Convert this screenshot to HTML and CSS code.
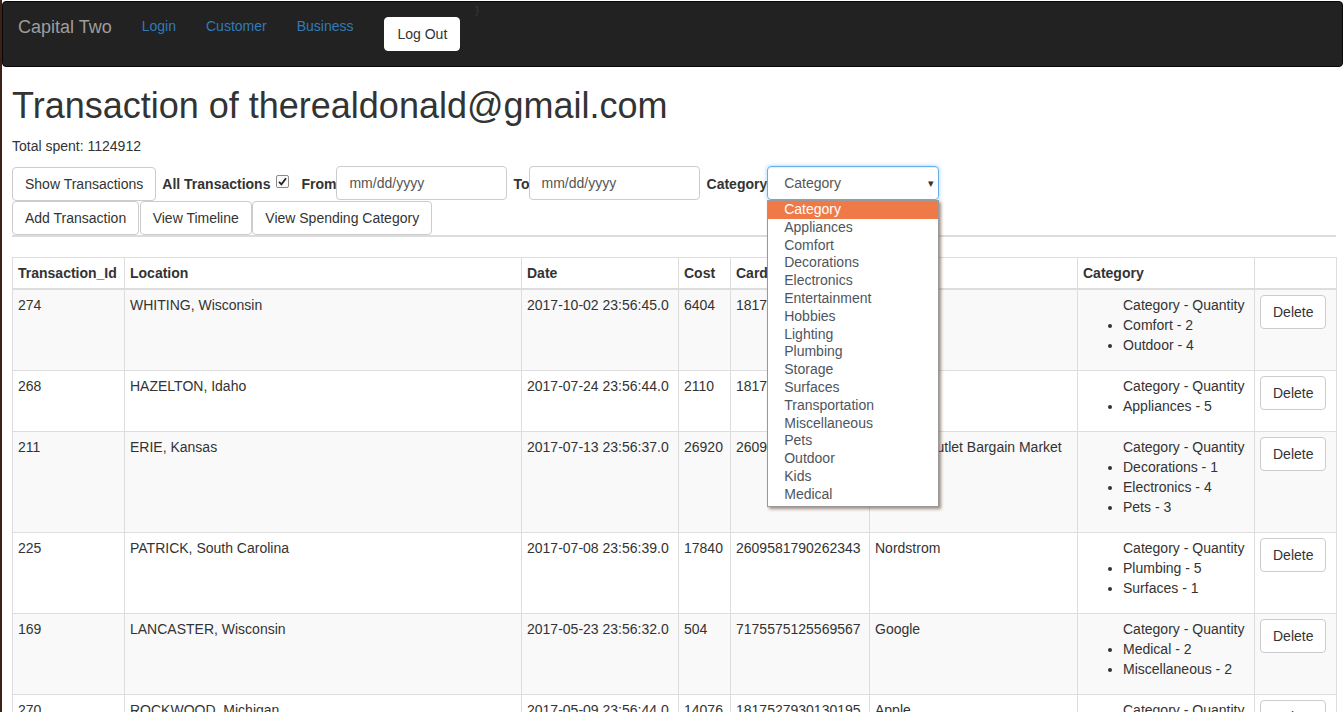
FILE: index.html
```html
<!DOCTYPE html>
<html>
<head>
<meta charset="utf-8">
<link rel="stylesheet" href="styles.css">
</head>
<body>
<nav class="navbar">
  <a class="brand">Capital Two</a>
  <ul class="nav-links">
    <li><a>Login</a></li>
    <li><a>Customer</a></li>
    <li><a>Business</a></li>
  </ul>
  <button class="btn logout">Log Out</button>
  <span class="stray">}</span>
</nav>
<main class="content">
  <h1>Transaction of therealdonald@gmail.com</h1>
  <p class="total">Total spent: 1124912</p>
  <div class="toolbar">
    <button class="btn">Show Transactions</button>
    <span class="lbl lbl-all">All Transactions</span>
    <span class="check"><svg width="9" height="9" viewBox="0 0 9 9"><path d="M1 4.8 L3.4 7.4 L8 1.2" fill="none" stroke="#222" stroke-width="1.8"/></svg></span>
    <span class="lbl lbl-from">From</span>
    <input class="field" type="text" placeholder="mm/dd/yyyy">
    <span class="lbl lbl-to">To</span>
    <input class="field" type="text" placeholder="mm/dd/yyyy">
    <span class="lbl lbl-cat">Category</span>
    <div class="select-wrap">
      <div class="select">Category<span class="caret">▾</span></div>
      <ul class="dropdown">
        <li class="active">Category</li>
        <li>Appliances</li>
        <li>Comfort</li>
        <li>Decorations</li>
        <li>Electronics</li>
        <li>Entertainment</li>
        <li>Hobbies</li>
        <li>Lighting</li>
        <li>Plumbing</li>
        <li>Storage</li>
        <li>Surfaces</li>
        <li>Transportation</li>
        <li>Miscellaneous</li>
        <li>Pets</li>
        <li>Outdoor</li>
        <li>Kids</li>
        <li>Medical</li>
      </ul>
    </div>
  </div>
  <div class="toolbar row2">
    <button class="btn">Add Transaction</button>
    <button class="btn">View Timeline</button>
    <button class="btn">View Spending Category</button>
  </div>
  <hr class="sep">
  <table class="tbl">
    <colgroup>
      <col class="c-id"><col class="c-loc"><col class="c-date"><col class="c-cost"><col class="c-card"><col class="c-merch"><col class="c-cat"><col class="c-act">
    </colgroup>
    <thead>
      <tr><th>Transaction_Id</th><th>Location</th><th>Date</th><th>Cost</th><th>Card</th><th>Merchant</th><th>Category</th><th></th></tr>
    </thead>
    <tbody>
      <tr class="odd">
        <td>274</td><td>WHITING, Wisconsin</td><td>2017-10-02 23:56:45.0</td><td>6404</td><td>1817527930130195</td><td>Apple</td>
        <td><ul class="cats"><li class="head">Category - Quantity</li><li>Comfort - 2</li><li>Outdoor - 4</li></ul></td>
        <td><button class="btn">Delete</button></td>
      </tr>
      <tr>
        <td>268</td><td>HAZELTON, Idaho</td><td>2017-07-24 23:56:44.0</td><td>2110</td><td>1817527930130195</td><td>Target</td>
        <td><ul class="cats"><li class="head">Category - Quantity</li><li>Appliances - 5</li></ul></td>
        <td><button class="btn">Delete</button></td>
      </tr>
      <tr class="odd">
        <td>211</td><td>ERIE, Kansas</td><td>2017-07-13 23:56:37.0</td><td>26920</td><td>2609581790262343</td><td>Factory Outlet Bargain Market</td>
        <td><ul class="cats"><li class="head">Category - Quantity</li><li>Decorations - 1</li><li>Electronics - 4</li><li>Pets - 3</li></ul></td>
        <td><button class="btn">Delete</button></td>
      </tr>
      <tr>
        <td>225</td><td>PATRICK, South Carolina</td><td>2017-07-08 23:56:39.0</td><td>17840</td><td>2609581790262343</td><td>Nordstrom</td>
        <td><ul class="cats"><li class="head">Category - Quantity</li><li>Plumbing - 5</li><li>Surfaces - 1</li></ul></td>
        <td><button class="btn">Delete</button></td>
      </tr>
      <tr class="odd">
        <td>169</td><td>LANCASTER, Wisconsin</td><td>2017-05-23 23:56:32.0</td><td>504</td><td>7175575125569567</td><td>Google</td>
        <td><ul class="cats"><li class="head">Category - Quantity</li><li>Medical - 2</li><li>Miscellaneous - 2</li></ul></td>
        <td><button class="btn">Delete</button></td>
      </tr>
      <tr>
        <td>270</td><td>ROCKWOOD, Michigan</td><td>2017-05-09 23:56:44.0</td><td>14076</td><td>1817527930130195</td><td>Apple</td>
        <td><ul class="cats"><li class="head">Category - Quantity</li><li>Kids - 1</li><li>Hobbies - 2</li></ul></td>
        <td><button class="btn">Delete</button></td>
      </tr>
    </tbody>
  </table>
</main>
</body>
</html>
```
FILE: styles.css
```css
* { box-sizing: border-box; }
html, body { margin: 0; padding: 0; }
body {
  font-family: "Liberation Sans", Arial, sans-serif;
  font-size: 14px;
  line-height: 20px;
  color: #333;
  background: #fff;
  border-left: 2px solid #3a2218;
  min-height: 712px;
}
.navbar {
  position: relative;
  display: flex;
  align-items: flex-start;
  height: 66px;
  margin-top: 1px;
  margin-right: 1px;
  background: #222;
  border: 1px solid #080808;
  border-radius: 4px;
}
.brand {
  padding: 15px 15px 15px 15px;
  font-size: 18px;
  line-height: 20px;
  color: #9d9d9d;
}
.nav-links {
  display: flex;
  list-style: none;
  margin: 0;
  padding: 0;
}
.nav-links a {
  display: block;
  padding: 15px;
  line-height: 18px;
  color: #337ab7;
}
.btn {
  display: inline-block;
  height: 34px;
  padding: 6px 12px;
  font-family: "Liberation Sans", Arial, sans-serif;
  font-size: 14px;
  line-height: 20px;
  color: #333;
  background: #fff;
  border: 1px solid #ccc;
  border-radius: 4px;
  white-space: nowrap;
}
.logout {
  margin: 15px 0 0 16px;
  border-color: #fff;
}
.stray {
  margin: 1px 0 0 15px;
  font-size: 11px;
  line-height: 14px;
  color: #3a3a3a;
}
.content {
  padding: 0 8px 0 10px;
}
h1 {
  margin: 19px 0 10px;
  font-size: 36px;
  font-weight: 500;
  line-height: 40px;
  color: #333;
}
.total {
  margin: 0 0 11px;
}
.toolbar {
  display: flex;
  align-items: center;
  height: 34px;
}
.row2 { gap: 0; }
.row2 .btn + .btn { margin-left: 0.5px; }
.lbl { font-weight: bold; }
.lbl-all { margin-left: 6px; }
.check {
  display: inline-flex;
  align-items: center;
  justify-content: center;
  width: 13px;
  height: 13px;
  margin-left: 6px;
  margin-top: -5px;
  background: #fafafa;
  border: 1px solid #8a8a8a;
  border-radius: 2px;
}
.lbl-from { margin-left: 12px; }
.lbl-to { margin-left: 6px; margin-right: -1px; }
.lbl-cat { margin-left: 7px; }
.field {
  width: 171px;
  height: 34px;
  margin-top: -2px;
  padding: 6px 12px;
  font-family: "Liberation Sans", Arial, sans-serif;
  font-size: 14px;
  color: #555;
  border: 1px solid #ccc;
  border-radius: 4px;
  outline: none;
}
.field::placeholder { color: #555; }
.select-wrap {
  position: relative;
  margin-left: 0;
  margin-top: -2px;
}
.select {
  position: relative;
  width: 172px;
  height: 34px;
  padding: 6px 16px;
  color: #555;
  border: 1px solid #66afe9;
  border-radius: 4px;
  box-shadow: inset 0 1px 1px rgba(0,0,0,.075), 0 0 4px rgba(102,175,233,.6);
}
.caret {
  position: absolute;
  right: 4px;
  top: 6px;
  font-size: 11px;
  color: #333;
}
.dropdown {
  position: absolute;
  z-index: 10;
  left: 0;
  top: 34px;
  width: 172px;
  margin: 0;
  padding: 0 0 2px;
  list-style: none;
  background: #fff;
  border: 1px solid #9a9a9a;
  box-shadow: 2px 2px 3px rgba(90,50,30,.55);
}
.dropdown li {
  height: 17.8px;
  padding-left: 16px;
  line-height: 17.8px;
  color: #4e5560;
}
.dropdown li.active {
  background: #ef7a47;
  color: #fff;
}
.sep {
  margin: 0 0 20px;
  height: 0;
  border: 0;
  border-top: 2px solid #dcdcdc;
}
.tbl {
  width: 1324px;
  table-layout: fixed;
  border-collapse: collapse;
  border: 1px solid #ddd;
}
.c-id { width: 112px; }
.c-loc { width: 397px; }
.c-date { width: 157px; }
.c-cost { width: 52px; }
.c-card { width: 139px; }
.c-merch { width: 208px; }
.c-cat { width: 177px; }
.c-act { width: 82px; }
.tbl th, .tbl td {
  padding: 5px;
  border: 1px solid #ddd;
  vertical-align: top;
  text-align: left;
  white-space: nowrap;
  overflow: hidden;
}
.tbl th {
  font-weight: bold;
  border-bottom: 2px solid #ddd;
}
.tbl tr.odd td { background: #f9f9f9; }
.cats {
  margin: 0 0 10px;
  padding-left: 40px;
}
.cats li.head { list-style: none; }
```
